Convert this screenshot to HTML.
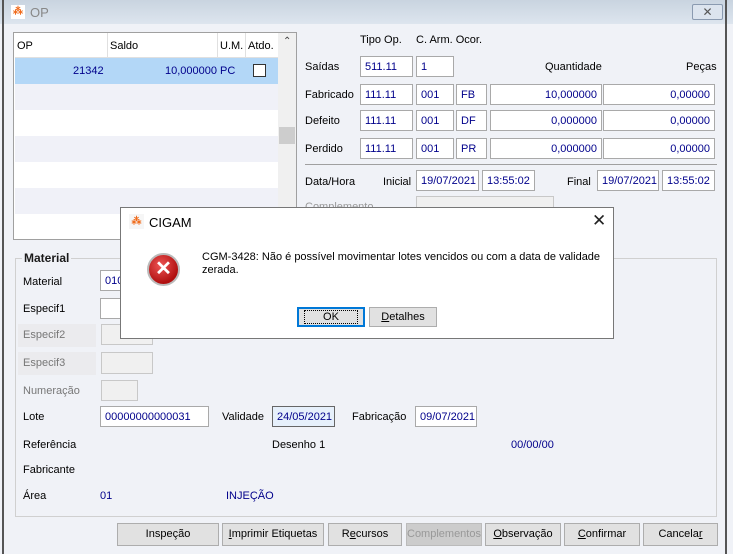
<!DOCTYPE html>
<html><head><meta charset="utf-8"><style>
*{margin:0;padding:0;box-sizing:border-box}
body{width:733px;height:554px;overflow:hidden;background:#f0f2f7;font-family:"Liberation Sans",sans-serif;font-size:11px;color:#000;position:relative}
.a{position:absolute;white-space:nowrap}
.in{position:absolute;background:#fff;border:1px solid #a9a9a9;color:#00008b;padding:4px 4px;font-size:11px;height:21px;line-height:12px;white-space:nowrap}
.r{text-align:right}
.g{background:#f0f0f0;border-color:#c8c8c8}
.btn{position:absolute;top:523px;height:23px;background:#e1e1e1;border:1px solid #adadad;text-align:center;line-height:21px;font-size:11px}
</style></head><body>
<div class="a" style="left:0;top:0;width:733px;height:24px;background:linear-gradient(#c9d4e0,#dde5ee)"></div>
<div class="a" style="left:2px;top:0;width:2px;height:554px;background:#555"></div>
<div class="a" style="left:725px;top:0;width:2px;height:554px;background:#555"></div>
<div class="a" style="left:11px;top:5px;width:14px;height:14px;background:#fff;color:#f06a1a;font-size:10px;line-height:14px;text-align:center;font-weight:bold">⁂</div>
<div class="a" style="left:30px;top:5px;color:#888;font-size:13px">OP</div>
<div class="a" style="left:692px;top:4px;width:31px;height:16px;border:1px solid #8a9ab0;border-radius:2px;background:#dce4ee;text-align:center;font-size:12px;line-height:14px;color:#555">✕</div>

<!-- grid -->
<div class="a" style="left:13px;top:32px;width:284px;height:208px;border:1px solid #a0a0a0;background:#fff"></div>
<div class="a" style="left:15px;top:34px;width:263px;height:24px;background:#fff;border-bottom:1px solid #e0e0e0"></div>
<div class="a" style="left:17px;top:40px">OP</div>
<div class="a" style="left:107px;top:33px;width:1px;height:24px;background:#e0e0e0"></div>
<div class="a" style="left:110px;top:40px">Saldo</div>
<div class="a" style="left:217px;top:33px;width:1px;height:24px;background:#e0e0e0"></div>
<div class="a" style="left:220px;top:40px">U.M.</div>
<div class="a" style="left:245px;top:33px;width:1px;height:24px;background:#e0e0e0"></div>
<div class="a" style="left:248px;top:40px">Atdo.</div>
<div class="a" style="left:15px;top:58px;width:263px;height:26px;background:#b3d7f7"></div>
<div class="a" style="left:73px;top:65px;color:#00008b">21342</div>
<div class="a" style="left:165px;top:65px;color:#00008b">10,000000</div>
<div class="a" style="left:220px;top:65px;color:#00008b">PC</div>
<div class="a" style="left:253px;top:64px;width:13px;height:13px;border:1px solid #333;background:#fff"></div>
<div class="a" style="left:15px;top:84px;width:263px;height:26px;background:#f0f1f8"></div>
<div class="a" style="left:15px;top:136px;width:263px;height:26px;background:#f0f1f8"></div>
<div class="a" style="left:15px;top:188px;width:263px;height:26px;background:#f0f1f8"></div>
<div class="a" style="left:278px;top:33px;width:18px;height:206px;background:#f0f0f0"></div>
<div class="a" style="left:283px;top:36px;font-size:10px;color:#444">⌃</div>
<div class="a" style="left:279px;top:127px;width:16px;height:17px;background:#cdcdcd"></div>

<!-- right panel -->
<div class="a" style="left:360px;top:34px">Tipo Op.</div>
<div class="a" style="left:416px;top:34px">C. Arm. Ocor.</div>
<div class="a" style="left:305px;top:61px">Saídas</div>
<div class="in" style="left:360px;top:56px;width:53px">511.11</div>
<div class="in" style="left:416px;top:56px;width:38px">1</div>
<div class="a" style="left:545px;top:61px">Quantidade</div>
<div class="a" style="left:686px;top:61px">Peças</div>

<div class="a" style="left:305px;top:89px">Fabricado</div>
<div class="in" style="left:360px;top:84px;width:53px">111.11</div>
<div class="in" style="left:416px;top:84px;width:38px">001</div>
<div class="in" style="left:456px;top:84px;width:31px">FB</div>
<div class="in r" style="left:490px;top:84px;width:112px">10,000000</div>
<div class="in r" style="left:603px;top:84px;width:112px">0,00000</div>

<div class="a" style="left:305px;top:115px">Defeito</div>
<div class="in" style="left:360px;top:110px;width:53px">111.11</div>
<div class="in" style="left:416px;top:110px;width:38px">001</div>
<div class="in" style="left:456px;top:110px;width:31px">DF</div>
<div class="in r" style="left:490px;top:110px;width:112px">0,000000</div>
<div class="in r" style="left:603px;top:110px;width:112px">0,00000</div>

<div class="a" style="left:305px;top:143px">Perdido</div>
<div class="in" style="left:360px;top:138px;width:53px">111.11</div>
<div class="in" style="left:416px;top:138px;width:38px">001</div>
<div class="in" style="left:456px;top:138px;width:31px">PR</div>
<div class="in r" style="left:490px;top:138px;width:112px">0,000000</div>
<div class="in r" style="left:603px;top:138px;width:112px">0,00000</div>

<div class="a" style="left:305px;top:164px;width:412px;height:1px;background:#a0a0a0"></div>
<div class="a" style="left:305px;top:176px">Data/Hora</div>
<div class="a" style="left:383px;top:176px">Inicial</div>
<div class="in" style="left:416px;top:170px;width:63px">19/07/2021</div>
<div class="in" style="left:482px;top:170px;width:53px">13:55:02</div>
<div class="a" style="left:567px;top:176px">Final</div>
<div class="in" style="left:597px;top:170px;width:62px">19/07/2021</div>
<div class="in" style="left:662px;top:170px;width:53px">13:55:02</div>
<div class="a" style="left:305px;top:201px;color:#999">Complemento</div>
<div class="in g" style="left:416px;top:196px;width:138px;height:30px"></div>

<!-- material group -->
<div class="a" style="left:15px;top:258px;width:702px;height:259px;border:1px solid #d0d0d0"></div>
<div class="a" style="left:22px;top:251px;background:#f0f2f7;padding:0 2px;font-weight:bold;font-size:12px;color:#1a1a1a">Material</div>
<div class="a" style="left:23px;top:276px">Material</div>
<div class="in" style="left:100px;top:270px;width:60px">010</div>
<div class="a" style="left:23px;top:303px">Especif1</div>
<div class="in" style="left:100px;top:298px;width:53px"></div>
<div class="a" style="left:18px;top:324px;width:78px;height:23px;background:#ebebee"></div>
<div class="a" style="left:23px;top:329px;color:#777">Especif2</div>
<div class="in g" style="left:101px;top:324px;width:52px;height:21px"></div>
<div class="a" style="left:18px;top:352px;width:78px;height:23px;background:#ebebee"></div>
<div class="a" style="left:23px;top:357px;color:#777">Especif3</div>
<div class="in g" style="left:101px;top:352px;width:52px;height:22px"></div>
<div class="a" style="left:23px;top:385px;color:#777">Numeração</div>
<div class="in g" style="left:101px;top:380px;width:37px;height:21px"></div>
<div class="a" style="left:23px;top:411px">Lote</div>
<div class="in" style="left:100px;top:406px;width:109px">00000000000031</div>
<div class="a" style="left:222px;top:411px">Validade</div>
<div class="in" style="left:272px;top:406px;width:63px;background:#e6f0fb;border-color:#666">24/05/2021</div>
<div class="a" style="left:352px;top:411px">Fabricação</div>
<div class="in" style="left:415px;top:406px;width:62px">09/07/2021</div>
<div class="a" style="left:23px;top:439px">Referência</div>
<div class="a" style="left:272px;top:439px">Desenho 1</div>
<div class="a" style="left:511px;top:439px;color:#00008b">00/00/00</div>
<div class="a" style="left:23px;top:464px">Fabricante</div>
<div class="a" style="left:23px;top:490px">Área</div>
<div class="a" style="left:100px;top:490px;color:#00008b">01</div>
<div class="a" style="left:226px;top:490px;color:#00008b">INJEÇÃO</div>

<div class="btn" style="left:117px;width:102px">Inspeção</div>
<div class="btn" style="left:222px;width:102px"><u>I</u>mprimir Etiquetas</div>
<div class="btn" style="left:328px;width:74px">R<u>e</u>cursos</div>
<div class="btn" style="left:406px;width:76px;color:#999;background:#ccc;border-color:#bbb">Complementos</div>
<div class="btn" style="left:485px;width:76px"><u>O</u>bservação</div>
<div class="btn" style="left:564px;width:76px"><u>C</u>onfirmar</div>
<div class="btn" style="left:643px;width:75px">Cancela<u>r</u></div>

<!-- dialog -->
<div class="a" style="left:120px;top:207px;width:494px;height:132px;background:#fff;border:1px solid #777"></div>
<div class="a" style="left:129px;top:214px;width:15px;height:15px;background:#f6f6f6;color:#f06a1a;font-size:10px;line-height:15px;text-align:center;font-weight:bold">⁂</div>
<div class="a" style="left:149px;top:215px;font-size:13px">CIGAM</div>
<div class="a" style="left:592px;top:211px;font-size:17px;color:#222">✕</div>
<div class="a" style="left:147px;top:253px;width:33px;height:33px;border-radius:50%;background:radial-gradient(circle at 40% 35%,#e55 0%,#b01010 70%);border:2px solid #bbb;color:#fff;font-size:20px;line-height:28px;text-align:center;font-weight:bold">✕</div>
<div class="a" style="left:202px;top:251px;line-height:13px;font-size:11px">CGM-3428: Não é possível movimentar lotes vencidos ou com a data de validade<br>zerada.</div>
<div class="a" style="left:297px;top:307px;width:68px;height:20px;border:2px solid #0078d7;background:#e1e1e1;text-align:center;line-height:16px"><span style="outline:1px dotted #000;padding:0 18px">OK</span></div>
<div class="a" style="left:369px;top:307px;width:68px;height:20px;border:1px solid #adadad;background:#e1e1e1;text-align:center;line-height:18px"><u>D</u>etalhes</div>
</body></html>
